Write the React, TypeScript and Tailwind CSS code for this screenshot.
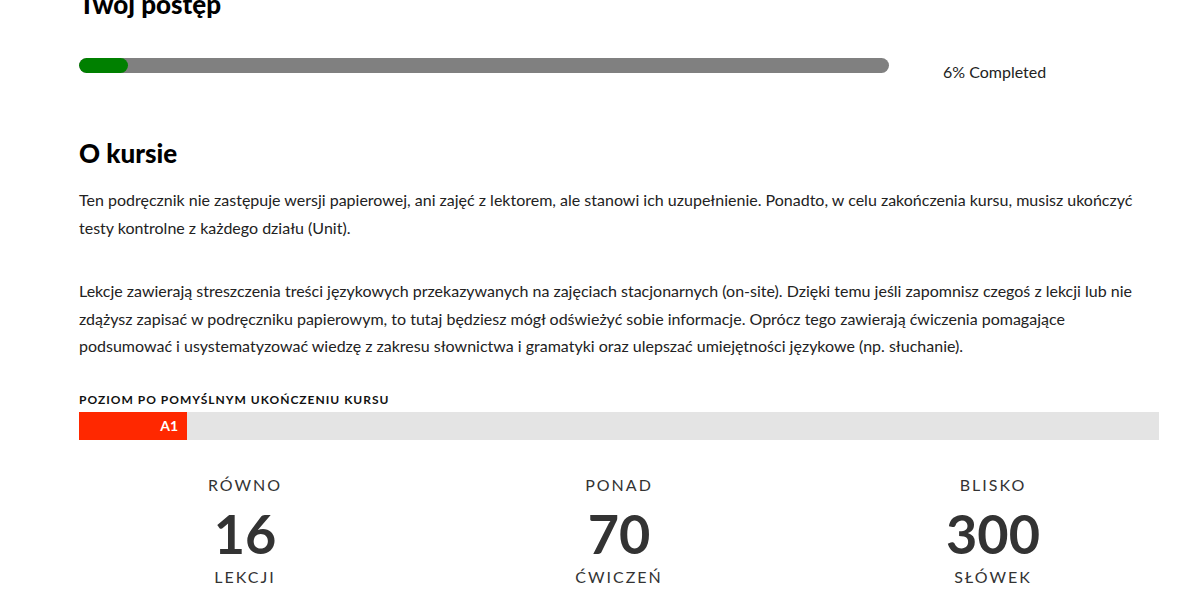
const stats = [
  { top: 'Równo', value: '16', bottom: 'Lekcji' },
  { top: 'Ponad', value: '70', bottom: 'Ćwiczeń' },
  { top: 'Blisko', value: '300', bottom: 'Słówek' },
];

export default function App() {
  return (
    <div className="min-h-[600px] overflow-hidden bg-white font-['Lato','Noto_Sans',sans-serif] text-[#333]">
      <div className="-mt-[14px] w-[1080px] pl-[79px] box-content">
        <h2 className="text-[26px] font-black leading-[36px] text-black">Twój postęp</h2>

        <div className="mt-[36px] flex items-start">
          <div className="h-[15px] w-[810px] overflow-hidden rounded-full bg-[#808080]">
            <div className="h-full rounded-full bg-[#008000]" style={{ width: '6%' }} />
          </div>
          <span className="ml-[54px] mt-[-2px] text-[16px] leading-[32px] text-[#222]">6% Completed</span>
        </div>

        <h2 className="mt-[47px] text-[26px] font-black leading-[36px] text-black">O kursie</h2>

        <div className="mt-[15px] text-[16px] leading-[27.5px] text-[#222]">
          <p>
            Ten podręcznik nie zastępuje wersji papierowej, ani zajęć z lektorem, ale stanowi ich uzupełnienie. Ponadto, w celu zakończenia kursu, musisz ukończyć
            testy kontrolne z każdego działu (Unit).
          </p>
          <p className="mt-[36px]">
            Lekcje zawierają streszczenia treści językowych przekazywanych na zajęciach stacjonarnych (on-site). Dzięki temu jeśli zapomnisz czegoś z lekcji lub nie
            zdążysz zapisać w podręczniku papierowym, to tutaj będziesz mógł odświeżyć sobie informacje. Oprócz tego zawierają ćwiczenia pomagające
            podsumować i usystematyzować wiedzę z zakresu słownictwa i gramatyki oraz ulepszać umiejętności językowe (np. słuchanie).
          </p>
        </div>

        <div className="mt-[33px] text-[12px] font-bold uppercase leading-[14px] tracking-[1px] text-[#111]">Poziom po pomyślnym ukończeniu kursu</div>
        <div className="mt-[5px] h-[28px] w-full bg-[#e4e4e4]">
          <div className="flex h-full items-center justify-end bg-[#ff2800] pr-[9px] text-[14px] font-bold text-white" style={{ width: '10%' }}>
            A1
          </div>
        </div>

        <div className="mt-[35px] grid grid-cols-3 gap-[42px] text-center">
          {stats.map((s) => (
            <div key={s.value} className="flex flex-col items-center">
              <div className="text-[16px] uppercase leading-[20px] tracking-[2px]">{s.top}</div>
              <div className="mt-[7px] text-[54px] font-bold leading-[64px]">{s.value}</div>
              <div className="mt-[1px] text-[16px] uppercase leading-[20px] tracking-[2px]">{s.bottom}</div>
            </div>
          ))}
        </div>
      </div>
    </div>
  );
}
